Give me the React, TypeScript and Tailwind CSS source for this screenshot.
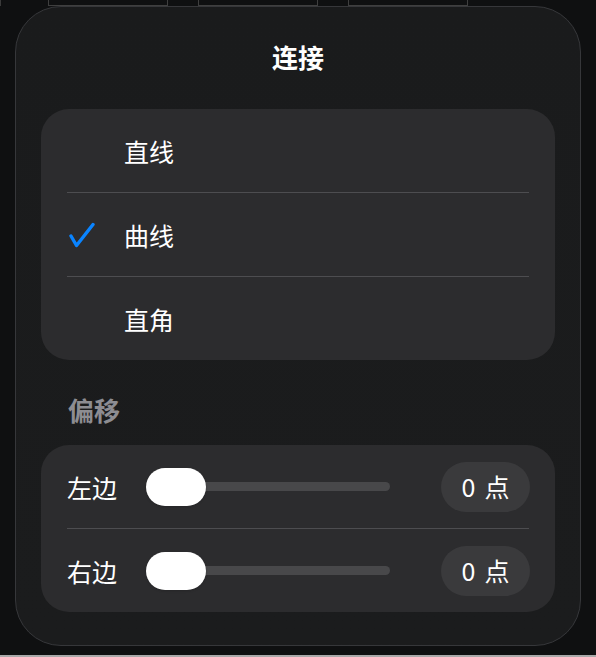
import React from "react";

const font = { fontFamily: '"Noto Sans CJK SC", "Noto Sans", sans-serif' };

function Check() {
    return <svg width="28" height="28" viewBox="0 0 28 28" fill="none">
        <path d="M4 15 L9.5 24.5 L26 3.5" stroke="#0a84ff" strokeWidth="3.4" strokeLinecap="round" strokeLinejoin="round" />
    </svg>
}

function OptionRow(props: { label: string, checked?: boolean }) {
    return <div className="h-[83px] flex items-center pl-[26px]">
        <div className="w-[57px] flex items-center">{props.checked ? <Check /> : null}</div>
        <span className="text-[25px] leading-[30px] text-white">{props.label}</span>
    </div>
}

function SliderRow(props: { label: string }) {
    return <div className="h-[83px] flex items-center pl-[26px] pr-[25px]">
        <span className="w-[79px] text-[25px] leading-[30px] text-white">{props.label}</span>
        <div className="relative w-[244px] h-[38px] flex items-center">
            <div className="w-full h-[9px] rounded-full bg-[#48484a]" />
            {/* thumb sits over the track */}
            <div className="absolute left-0 top-0 w-[60px] h-[38px] rounded-full bg-white shadow" />
        </div>
        <div className="ml-auto w-[89px] h-[50px] rounded-full bg-[#3a3a3c] flex items-center justify-center text-[25px] text-white">
            <span>0</span><span className="ml-[9px]">点</span>
        </div>
    </div>
}

function Separator() {
    return <div className="mx-[26px] h-px bg-[#4d4d50]" />
}

export default function App() {
    return <div className="w-[596px] h-[657px] bg-[#0f1011] overflow-hidden flex flex-col" style={font}>
        {/* background table edge peeking at the top */}
        <div className="h-[6px] flex shrink-0 border-l border-[#3a3a3a]">
            <div className="w-[47px]" />
            <div className="w-[120px] border-x border-b border-[#3f3f3f]" />
            <div className="w-[30px]" />
            <div className="w-[120px] border-x border-b border-[#3f3f3f]" />
            <div className="w-[30px]" />
            <div className="w-[120px] border-x border-b border-[#3f3f3f]" />
        </div>

        <div className="mx-[15px] h-[640px] shrink-0 rounded-[46px] border border-[#36373a] bg-gradient-to-b from-[#1a1b1c] to-[#1b1c1d] pt-[34px] flex flex-col">
            <div className="text-center text-[26px] leading-[32px] font-semibold text-white">连接</div>

            <div className="mt-[36px] mx-[25px] rounded-[28px] bg-[#2c2c2e] overflow-hidden">
                <OptionRow label="直线" />
                <Separator />
                <OptionRow label="曲线" checked />
                <Separator />
                <OptionRow label="直角" />
            </div>

            <div className="mt-[37px] mb-[22px] pl-[52px] text-[26px] leading-[26px] font-semibold text-[#8d8d92]">偏移</div>

            <div className="mx-[25px] rounded-[28px] bg-[#2c2c2e] overflow-hidden">
                <SliderRow label="左边" />
                <Separator />
                <SliderRow label="右边" />
            </div>
        </div>

        <div className="flex-1 flex flex-col justify-end">
            <div className="h-[2px] bg-[#a9a9a9]" />
        </div>
    </div>
}
